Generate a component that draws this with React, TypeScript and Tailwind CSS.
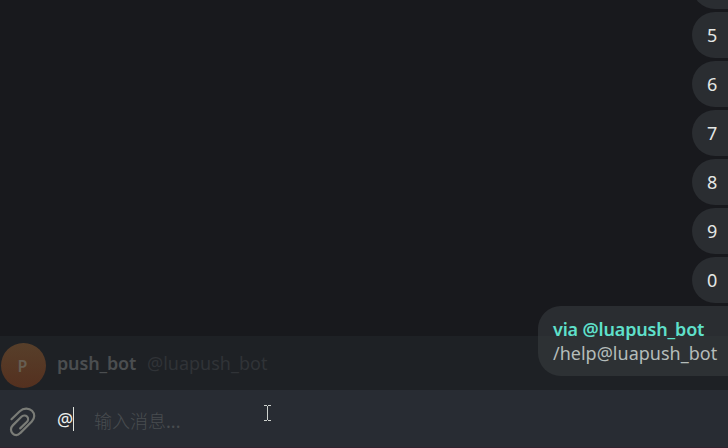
const digits = ["", "5", "6", "7", "8", "9", "0"];

function Bubble({ label }: { label: string }) {
  return (
    <div className="flex h-[46px] w-9 shrink-0 items-center rounded-l-[23px] bg-[#2a2d31] pl-[15px] text-[18px] leading-6 text-[#e4e7e5]">
      {label}
    </div>
  );
}

function Suggestion() {
  return (
    <div className="absolute inset-x-0 bottom-0 flex h-[54px] items-center bg-[#1e2125] pl-px">
      <div className="mt-1 flex size-[45px] items-center justify-center rounded-full bg-linear-to-b from-[#573f2a] to-[#54301f] pr-0.5 pt-0.5 text-[16px] font-semibold text-[#665e52]">
        P
      </div>
      <span className="ml-[11px] w-[79px] text-[18px] leading-6 font-semibold tracking-[-0.16px] text-[#4b4e50]">push_bot</span>
      <span className="ml-[11px] text-[18px] leading-6 text-[#303337]">@luapush_bot</span>
    </div>
  );
}

export default function App() {
  return (
    <div className="flex h-[448px] w-[728px] flex-col overflow-hidden bg-[#18191d] font-['Noto_Sans','Noto_Sans_CJK_SC',sans-serif]">
      <main className="relative h-[390px] shrink-0 overflow-hidden">
        <Suggestion />
        <div className="relative flex h-[376px] flex-col items-end justify-end gap-[3px]">
          {digits.map((d) => (
            <Bubble key={d} label={d} />
          ))}
          <div className="h-[70px] w-[190px] shrink-0 rounded-l-[23px] bg-linear-to-b from-[#2a2d31] from-43% to-[#2d3134] to-43% pt-[11px] pl-[15px] text-[18px] leading-6 whitespace-nowrap">
            <div className="font-semibold tracking-[-0.16px] text-[#5fe0cb]">via @luapush_bot</div>
            <div className="text-[#b4bcba]">/help@luapush_bot</div>
          </div>
        </div>
      </main>
      <footer className="flex h-[58px] shrink-0 items-start border-b border-[#30232f] bg-[#282c33]">
        <svg className="mt-[17px] ml-2 h-8 w-7 shrink-0" viewBox="8 407 28 32" fill="none" stroke="#7a7c77" strokeWidth="2.2" strokeLinecap="round" strokeLinejoin="round">
          <path d="M11.5 419.2 L19.8 411.2 C23.5 407.8 29 407.8 32 410.8 C35 413.8 35 418.3 31.8 421.6 L20.2 433.1 C17.8 435.7 14.8 435.7 12.6 433.4 C10.4 431.2 10.4 427.8 12.8 425.4 L21.4 416.8 C23 415.1 25.6 415.1 27 416.5 C28.5 418 28.4 420.4 26.8 422 L20.2 428.4" />
        </svg>
        <span className="mt-[17px] ml-[21px] w-[16px] text-[18px] leading-6 text-[#eef1ee]">@</span>
        <span className="mt-[17px] h-6 w-px bg-[#dfe3de]" />
        <span className="mt-[19px] ml-[20px] w-[88px] text-[18px] leading-6 font-light whitespace-nowrap text-[#484c50]">
          输入消息<span className="font-normal">...</span>
        </span>
        <svg className="mt-[15px] ml-[82px] h-4 w-[7px] shrink-0" viewBox="0 0 7 16" shapeRendering="crispEdges" fill="#ced2ce">
          <path d="M0 0h3v1H0zM4 0h3v1H4zM3 1h1v14H3zM0 15h3v1H0zM4 15h3v1H4z" />
        </svg>
      </footer>
    </div>
  );
}
